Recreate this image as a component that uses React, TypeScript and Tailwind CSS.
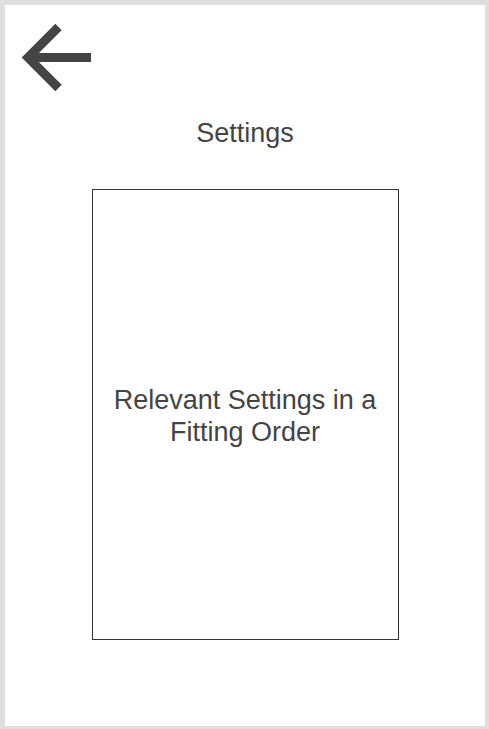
export default function App() {
  return (
    <div className="h-[729px] w-[489px] bg-[#dedede] pt-[5px] pl-[5px] pr-[4px] pb-[3px]">
      <div
        className="h-full w-full bg-white text-[#444444]"
        style={{ fontFamily: '"Liberation Sans", Arial, sans-serif' }}
      >
        {/* Back arrow */}
        <div className="pt-[13px] pl-[13px]">
          <svg width="80" height="80" viewBox="0 0 80 80" fill="none" className="block">
            <path
              d="M40.5 9 L10 39.5 L40.5 70 M10 39.5 L73 39.5"
              stroke="#444444"
              strokeWidth="9"
              strokeLinejoin="miter"
              strokeLinecap="butt"
            />
          </svg>
        </div>

        <h1 className="mt-[20px] text-center text-[27px] leading-[30px] font-normal">Settings</h1>

        <div className="mx-auto mt-[41px] flex h-[451px] w-[307px] items-center justify-center border border-[#333333] px-4 pt-[2px]">
          <p className="text-center text-[27px] leading-[32px]">
            Relevant Settings in a<br />Fitting Order
          </p>
        </div>
      </div>
    </div>
  )
}
